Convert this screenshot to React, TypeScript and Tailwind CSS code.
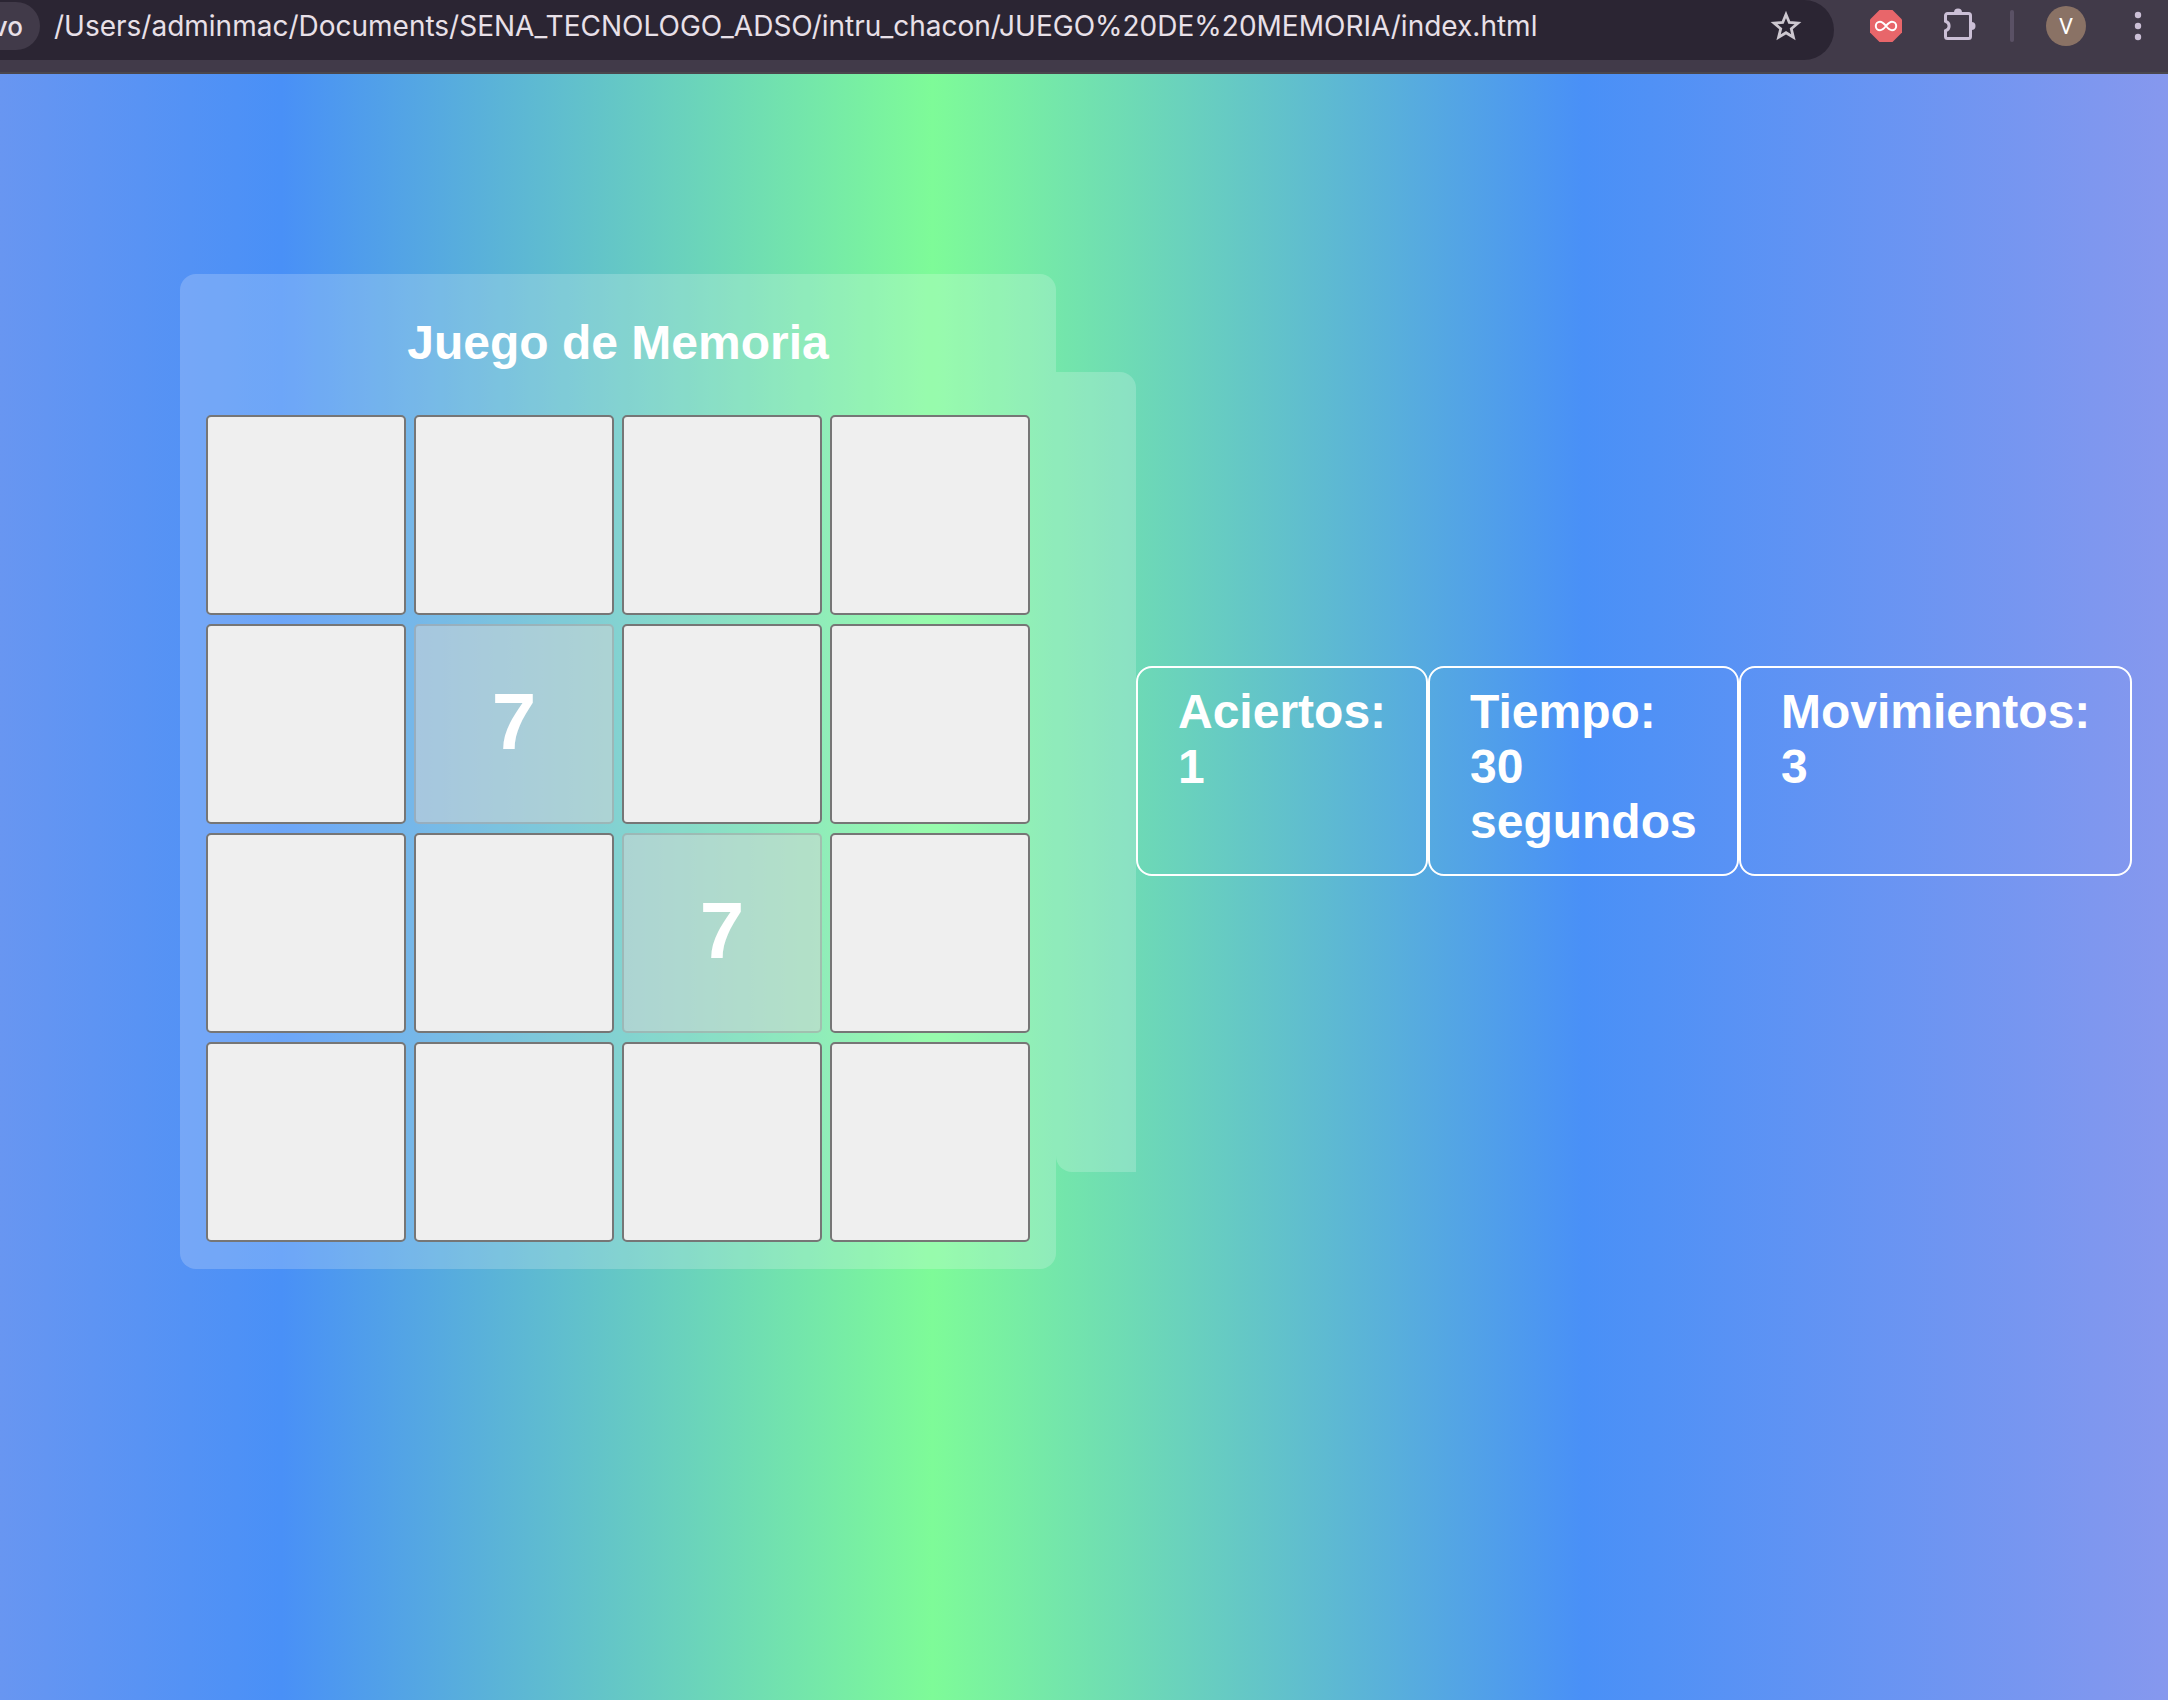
const cards: (number | null)[] = [
  null, null, null, null,
  null, 7, null, null,
  null, null, 7, null,
  null, null, null, null,
];

const stats = [
  { label: "Aciertos:", value: "1", size: "w-[292px]" },
  { label: "Tiempo:", value: "30 segundos", size: "w-[311px]" },
  { label: "Movimientos:", value: "3", size: "w-[393px]" },
];

function Toolbar() {
  return (
    <header className="flex h-[74px] items-start overflow-hidden border-b-2 border-[#4a474d] bg-[#413a49] font-[Inter,sans-serif]">
      <div className="flex h-[60px] min-w-0 flex-1 items-start rounded-br-[34px] rounded-tr-[34px] bg-[#2b2533]">
        <div className="mt-[2px] flex h-12 w-10 shrink-0 items-center justify-end rounded-r-full bg-[#413a49] pr-[17px] text-[26px] font-medium text-[#e8e0e8]">
          <span>vo</span>
        </div>
        <input
          aria-label="Dirección"
          className="h-[52px] min-w-0 flex-1 bg-transparent pl-[14px] text-[28px] text-[#e8e0e8] outline-none"
          defaultValue="/Users/adminmac/Documents/SENA_TECNOLOGO_ADSO/intru_chacon/JUEGO%20DE%20MEMORIA/index.html"
        />
        <button aria-label="Favorito" className="mr-8 mt-[10px] text-[#cdc8d0]">
          <svg className="size-8" viewBox="0 0 32 32" fill="none" stroke="currentColor" strokeWidth="2.8">
            <path d="M16 4.500l3.300 8 8.600.700-6.600 5.600 2.100 8.500-7.400-4.600-7.400 4.600 2.100-8.500-6.600-5.600 8.600-.700z" />
          </svg>
        </button>
      </div>
      <div className="flex h-[52px] shrink-0 items-center pl-9">
        <button aria-label="Bloqueador">
          <svg className="size-8" viewBox="0 0 32 32">
            <path d="M9.500 0h13L32 9.500v13L22.500 32h-13L0 22.500v-13z" fill="#e8666a" />
            <path d="M16 16c-2-2.500-3.700-4.200-6-4.200a4.200 4.200 0 0 0 0 8.400c2.300 0 4-1.700 6-4.200s3.700-4.200 6-4.200a4.200 4.200 0 0 1 0 8.400c-2.300 0-4-1.700-6-4.200z" fill="none" stroke="#fff" strokeWidth="2" />
          </svg>
        </button>
        <button aria-label="Extensiones" className="ml-[42px]">
          <svg className="size-8 overflow-visible" viewBox="0 0 32 32">
            <path d="M3.500 3.500h21a2 2 0 0 1 2 2v21a2 2 0 0 1-2 2h-21a2 2 0 0 1-2-2v-5.700a5 5 0 0 0 0-9.600V5.500a2 2 0 0 1 2-2z" fill="none" stroke="#cbbfd6" strokeWidth="3" />
            <path d="M10 2.500a4 4 0 0 1 8 0zM27.500 12a4 4 0 0 1 0 8z" fill="#cbbfd6" />
          </svg>
        </button>
        <span className="ml-[34px] h-8 w-1 rounded-full bg-[#5a5165]" />
        <button className="ml-8 flex size-10 items-center justify-center rounded-full bg-[#8a7265] font-[Roboto,sans-serif] text-[22px] text-white">V</button>
        <button aria-label="Menú" className="ml-12 mr-[26px]">
          <svg className="h-8 w-2" viewBox="0 0 8 32" fill="#cbbfd6">
            <circle cx="4" cy="5" r="3.200" />
            <circle cx="4" cy="16" r="3.200" />
            <circle cx="4" cy="27" r="3.200" />
          </svg>
        </button>
      </div>
    </header>
  );
}

function Board() {
  return (
    <section className="flex flex-col rounded-2xl bg-white/20 px-[26px] pb-[27px]">
      <h1 className="flex h-[141px] items-center justify-center pb-1 text-5xl font-bold">Juego de Memoria</h1>
      <div className="grid grid-cols-4 gap-x-2 gap-y-[9px]">
        {cards.map((value, i) => (
          <button
            key={i}
            aria-label={value === null ? `Carta ${i + 1}` : undefined}
            disabled={value !== null}
            className={
              value === null
                ? "size-[200px] rounded-[5px] border-2 border-[#767676] bg-[#efefef]"
                : "size-[200px] rounded-[5px] border-2 border-[#767676]/30 bg-[#d6d6d6]/50 pb-1 text-[80px] font-bold text-white"
            }
          >
            {value}
          </button>
        ))}
      </div>
    </section>
  );
}

export default function App() {
  return (
    <div className="flex min-h-screen flex-col font-['Liberation_Sans',sans-serif] text-white">
      <Toolbar />
      <main className="flex flex-1 items-start bg-[linear-gradient(90deg,#6896f1_0%,#4990f7_13%,#7efb98_43%,#4990f7_73%,#8698ee_100%)] pl-[180px] pt-[200px]">
        <div className="flex items-center">
          <Board />
          <div className="h-[800px] w-20 shrink-0 rounded-bl-2xl rounded-tr-2xl bg-white/20" />
          <div className="flex pb-[2px]">
            {stats.map((s) => (
              <h2 key={s.label} className={`${s.size} h-[210px] shrink-0 rounded-2xl border-2 border-white px-10 pt-4 text-5xl leading-[55px] font-bold`}>
                {s.label}
                <br />
                {s.value}
              </h2>
            ))}
          </div>
        </div>
      </main>
    </div>
  );
}
